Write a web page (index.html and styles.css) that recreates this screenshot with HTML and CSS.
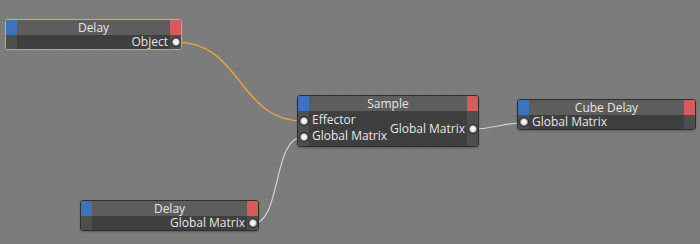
FILE: index.html
```html
<!DOCTYPE html>
<html lang="en">
<head>
    <meta charset="UTF-8">
    <title>Node Editor</title>
    <link rel="stylesheet" href="styles.css">
</head>
<body>

    <div class="canvas">

        <!-- connections -->
        <svg class="wires" width="700" height="244" viewBox="0 0 700 244">
            <path class="wire selected" d="M176,42 C242,42 238,121 303,121"/>
            <path class="wire" d="M252,224 C282,224 272,137 303,137"/>
            <path class="wire" d="M472,129 C498,129 498,123 524,123"/>
        </svg>

        <!-- Delay (selected) -->
        <div class="node is-selected node-delay-a">
            <div class="node-head">
                <span class="tab tab-in"></span>
                <span class="node-title">Delay</span>
                <span class="tab tab-out"></span>
            </div>
            <div class="node-body">
                <div class="col-in"></div>
                <div class="col-mid">
                    <div class="outputs"><span class="port-label">Object</span></div>
                </div>
                <div class="col-out"><span class="port"></span></div>
            </div>
        </div>

        <!-- Sample -->
        <div class="node node-sample">
            <div class="node-head">
                <span class="tab tab-in"></span>
                <span class="node-title">Sample</span>
                <span class="tab tab-out"></span>
            </div>
            <div class="node-body">
                <div class="col-in">
                    <span class="port"></span>
                    <span class="port"></span>
                </div>
                <div class="col-mid">
                    <div class="inputs">
                        <span class="port-label">Effector</span>
                        <span class="port-label">Global Matrix</span>
                    </div>
                    <div class="outputs"><span class="port-label">Global Matrix</span></div>
                </div>
                <div class="col-out"><span class="port"></span></div>
            </div>
        </div>

        <!-- Cube Delay -->
        <div class="node node-cube">
            <div class="node-head">
                <span class="tab tab-in"></span>
                <span class="node-title">Cube Delay</span>
                <span class="tab tab-out"></span>
            </div>
            <div class="node-body">
                <div class="col-in"><span class="port"></span></div>
                <div class="col-mid">
                    <div class="inputs"><span class="port-label">Global Matrix</span></div>
                </div>
                <div class="col-out"></div>
            </div>
        </div>

        <!-- Delay -->
        <div class="node node-delay-b">
            <div class="node-head">
                <span class="tab tab-in"></span>
                <span class="node-title">Delay</span>
                <span class="tab tab-out"></span>
            </div>
            <div class="node-body">
                <div class="col-in"></div>
                <div class="col-mid">
                    <div class="outputs"><span class="port-label">Global Matrix</span></div>
                </div>
                <div class="col-out"><span class="port"></span></div>
            </div>
        </div>

    </div>

</body>
</html>
```

FILE: styles.css
```css
:root {
    --bg: #7c7c7c;
    --grid-line: #787878;
    --node-head: #5d5d5d;
    --node-body: #3f3f3f;
    --node-side: #4e4e4e;
    --node-border: #2f2f2f;
    --tab-in: #3d73ba;
    --tab-out: #d65c5c;
    --text: #e6e6e6;
    --wire: #d2d2d2;
    --wire-selected: #e2a53a;
    --font: "Open Sans", "DejaVu Sans", sans-serif;
}

html, body {
    margin: 0;
    padding: 0;
}

body {
    font-family: var(--font);
    background: var(--bg);
    overflow: hidden;
}

/* 网格背景 */
.canvas {
    position: relative;
    width: 700px;
    height: 244px;
    background-color: var(--bg);
    background-image:
        linear-gradient(to right, var(--grid-line) 1px, transparent 1px),
        linear-gradient(to bottom, var(--grid-line) 1px, transparent 1px);
    background-size: 16px 16px;
    background-position: 14px 4px;
}

.wires {
    position: absolute;
    left: 0;
    top: 0;
}

.wire {
    fill: none;
    stroke: var(--wire);
    stroke-width: 1.2;
}

.wire.selected {
    stroke: var(--wire-selected);
    stroke-width: 1.5;
}

/* 节点 */
.node {
    position: absolute;
    display: flex;
    flex-direction: column;
    border: 1px solid var(--node-border);
    border-radius: 3px;
    overflow: hidden;
    box-shadow: 0 1px 2px rgba(0, 0, 0, 0.25);
    color: var(--text);
    font-size: 12px;
    line-height: 14px;
}

.node.is-selected {
    border-color: var(--wire-selected);
    box-shadow: 0 0 1px rgba(226, 165, 58, 0.8);
}

.node-delay-a { left: 5px;   top: 19px;  width: 175px; }
.node-sample  { left: 297px; top: 95px;  width: 180px; }
.node-cube    { left: 517px; top: 99px;  width: 177px; }
.node-delay-b { left: 80px;  top: 200px; width: 177px; }

.node-head {
    display: flex;
    height: 15px;
    background: var(--node-head);
}

.tab {
    width: 11px;
    flex: none;
}

.tab-in  { background: var(--tab-in); }
.tab-out { background: var(--tab-out); }

.node-title {
    flex: 1;
    text-align: center;
    line-height: 15px;
}

.node-body {
    display: flex;
    background: var(--node-body);
}

.col-in,
.col-out {
    width: 11px;
    flex: none;
    background: var(--node-side);
    display: flex;
    flex-direction: column;
    align-items: center;
    justify-content: center;
    gap: 8px;
}

.col-mid {
    flex: 1;
    display: flex;
    justify-content: space-between;
    align-items: center;
    padding: 0 2px 0 3px;
}

.inputs,
.outputs {
    display: flex;
    flex-direction: column;
}

.outputs {
    margin-left: auto;
}

.port-label {
    height: 14px;
    white-space: nowrap;
}

.node-sample .inputs {
    padding: 1px 0 2px;
}

.node-sample .inputs .port-label {
    height: 16px;
    line-height: 16px;
}

.port {
    width: 6px;
    height: 6px;
    border-radius: 50%;
    background: #f2f2f2;
    border: 1px solid #8c8c8c;
    box-shadow: 0 0 0 1px #2e2e2e;
}
```
